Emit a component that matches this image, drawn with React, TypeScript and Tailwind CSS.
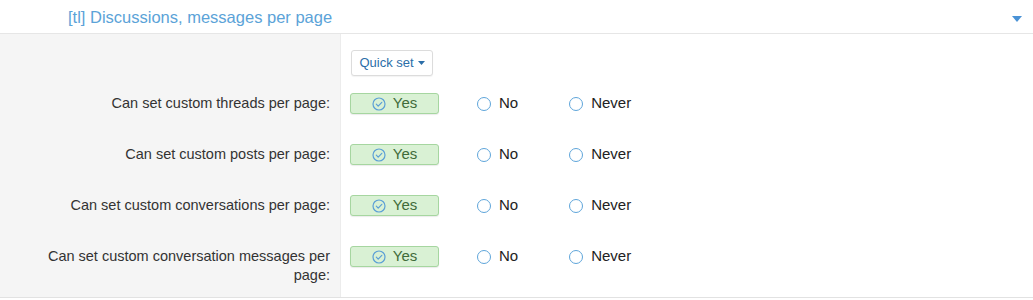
import React from "react";

const rows = [
  "Can set custom threads per page:",
  "Can set custom posts per page:",
  "Can set custom conversations per page:",
  "Can set custom conversation messages per page:",
];

function CheckCircle() {
  return (
    <svg width="14" height="14" viewBox="0 0 14 14" fill="none">
      <circle cx="7" cy="7" r="6" stroke="#5b9fd6" strokeWidth="1.2" />
      <path d="M4.3 7.2l1.9 1.9 3.6-3.8" stroke="#5b9fd6" strokeWidth="1.2" strokeLinecap="round" strokeLinejoin="round" />
    </svg>
  );
}

function Radio({ label }: { label: string }) {
  return (
    <div className="flex items-center gap-[8px]">
      <span className="w-[14px] h-[14px] rounded-full border-[1.5px] border-[#5ea5da] bg-white" />
      <span className="text-[15px] text-[#222]">{label}</span>
    </div>
  );
}

export default function App() {
  return (
    <div className="w-[1033px] h-[300px] bg-white overflow-hidden font-['Liberation_Sans',Arial,sans-serif]">
      <div className="h-[34px] flex items-center justify-between border-b border-[#e6e6e6] pl-[68px] pr-[11px] pt-[2px]">
        <span className="text-[16.5px] text-[#5ba3d8]">[tl] Discussions, messages per page</span>
        <svg width="10" height="6" viewBox="0 0 10 6" className="mt-[2px]">
          <path d="M0 0h10L5 6z" fill="#4a92d6" />
        </svg>
      </div>

      <div className="flex">
        <div className="w-[341px] h-[42px] bg-[#f5f5f5] border-r border-[#ececec]" />
        <div className="pl-[10px] pt-[16px]">
          <button className="h-[26px] w-[82px] flex items-center justify-center gap-[4px] rounded-[3px] border border-[#dcdcdc] bg-white shadow-[0_1px_1px_rgba(0,0,0,0.05)] text-[13px] text-[#2b6ea8]">
            Quick set
            <svg width="7" height="4" viewBox="0 0 7 4">
              <path d="M0 0h7L3.5 4z" fill="#2b6ea8" />
            </svg>
          </button>
        </div>
      </div>

      {rows.map((label, i) => (
        <div key={i} className="flex">
          <div
            className={`w-[341px] bg-[#f5f5f5] border-r border-[#ececec] pl-[40px] pr-[10px] pt-[18px] text-right text-[14.5px] leading-[19px] text-[#333] ${
              i === rows.length - 1 ? "h-[68px]" : "h-[51px]"
            }`}
          >
            {label}
          </div>
          <div className="pl-[9px] pt-[17px] flex items-start">
            <div className="h-[21px] w-[89px] flex items-center justify-center gap-[7px] rounded-[3px] border border-[#a6d6a0] bg-[#d9f1d4] shadow-[0_1px_1px_rgba(0,0,0,0.08)] text-[15px] text-[#3f6b3a]">
              <CheckCircle />
              Yes
            </div>
            <div className="ml-[38px] h-[21px] flex items-center">
              <Radio label="No" />
            </div>
            <div className="ml-[51px] h-[21px] flex items-center">
              <Radio label="Never" />
            </div>
          </div>
        </div>
      ))}
      <div className="border-t border-[#e2e2e2]" />
    </div>
  );
}
